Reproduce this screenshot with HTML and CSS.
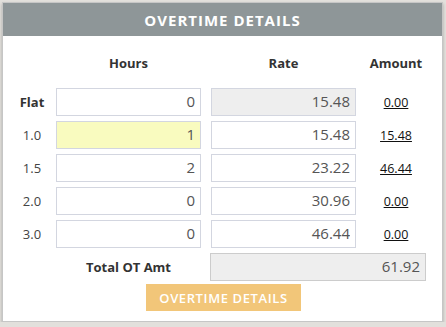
FILE: index.html
```html
<!DOCTYPE html>
<html>
<head>
    <title>Overtime Details</title>
    <meta charset="UTF-8">
    <link rel="stylesheet" href="styles.css">
</head>
<body>
    <div class="panel">
        <div class="panel-title">OVERTIME DETAILS</div>

        <div class="ot-grid">
            <div></div>
            <div class="col-head">Hours</div>
            <div class="col-head">Rate</div>
            <div class="col-head">Amount</div>

            <div class="row-label bold">Flat</div>
            <input type="text" class="num" value="0">
            <input type="text" class="num readonly" value="15.48" readonly>
            <a class="amount" href="#">0.00</a>

            <div class="row-label">1.0</div>
            <input type="text" class="num active" value="1">
            <input type="text" class="num" value="15.48">
            <a class="amount" href="#">15.48</a>

            <div class="row-label">1.5</div>
            <input type="text" class="num" value="2">
            <input type="text" class="num" value="23.22">
            <a class="amount" href="#">46.44</a>

            <div class="row-label">2.0</div>
            <input type="text" class="num" value="0">
            <input type="text" class="num" value="30.96">
            <a class="amount" href="#">0.00</a>

            <div class="row-label">3.0</div>
            <input type="text" class="num" value="0">
            <input type="text" class="num" value="46.44">
            <a class="amount" href="#">0.00</a>

            <div></div>
            <div class="total-label">Total OT Amt</div>
            <input type="text" class="num readonly total" value="61.92" readonly>
        </div>

        <div class="actions">
            <button class="ot-btn">OVERTIME DETAILS</button>
        </div>
    </div>
</body>
</html>
```

FILE: styles.css
```css
body {
    font-family: 'Open Sans', 'DejaVu Sans', sans-serif;
    margin: 0;
    padding: 2px 3px 0 2px;
    background-color: #e2e0dc;
    color: #444;
}

.panel {
    width: 439px;
    background: white;
    border: 1px solid #c6c6c6;
    box-shadow: 0 2px 3px rgba(0,0,0,0.25);
    padding-bottom: 10px;
}

.panel-title {
    background: #8e9698;
    color: white;
    height: 33px;
    line-height: 34px;
    text-align: center;
    font-weight: 700;
    font-size: 15px;
    letter-spacing: 1px;
}

.ot-grid {
    display: grid;
    grid-template-columns: 28px 145px 145px 60px;
    column-gap: 10px;
    row-gap: 5px;
    align-items: center;
    padding: 18px 0 0 15px;
}

.col-head {
    text-align: center;
    font-weight: 700;
    font-size: 13px;
    line-height: 18px;
    color: #333;
    margin-bottom: 11px;
}

.row-label {
    text-align: center;
    font-size: 13px;
    color: #444;
}

.row-label.bold {
    font-weight: 700;
    color: #333;
}

.num {
    box-sizing: border-box;
    width: 145px;
    height: 28px;
    border: 1px solid #d3d6e0;
    padding: 0 5px 2px 5px;
    text-align: right;
    font-family: 'Open Sans', sans-serif;
    font-size: 15px;
    color: #555;
    background: white;
    outline: none;
}

.num.readonly {
    background: #eeeeee;
}

.num.active {
    background: #f9fbbf;
}

.num.total {
    grid-column: 3 / span 2;
    width: 216px;
    margin-left: -1px;
    border-color: #cccccc;
}

.amount {
    text-align: center;
    font-size: 12.5px;
    font-weight: 400;
    color: #111;
    text-decoration: underline;
}

.total-label {
    text-align: center;
    font-weight: 700;
    font-size: 13px;
    color: #333;
}

.actions {
    display: flex;
    justify-content: center;
    margin-top: 3px;
    padding-left: 2px;
}

.ot-btn {
    background-color: #f2c679;
    color: white;
    border: none;
    width: 155px;
    height: 27px;
    padding: 0;
    font-family: 'Open Sans', sans-serif;
    font-weight: 600;
    font-size: 13px;
    letter-spacing: 0.6px;
    cursor: pointer;
}
```
